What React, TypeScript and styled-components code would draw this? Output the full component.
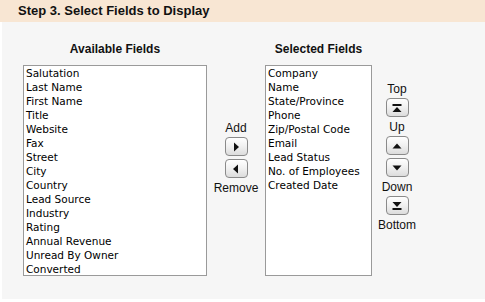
import { createGlobalStyle } from 'styled-components';
import styled from 'styled-components';

const available = [
  'Salutation',
  'Last Name',
  'First Name',
  'Title',
  'Website',
  'Fax',
  'Street',
  'City',
  'Country',
  'Lead Source',
  'Industry',
  'Rating',
  'Annual Revenue',
  'Unread By Owner',
  'Converted',
];

const selected = [
  'Company',
  'Name',
  'State/Province',
  'Phone',
  'Zip/Postal Code',
  'Email',
  'Lead Status',
  'No. of Employees',
  'Created Date',
];

type IconKind = 'right' | 'left' | 'top' | 'up' | 'down' | 'bottom';

const ArrowIcon = ({ kind }: { kind: IconKind }) => {
  return (
    <svg width="12" height="12" viewBox="0 0 12 12">
      {kind === 'right' && <polygon points="4,1.5 9,6 4,10.5" fill="#111" />}
      {kind === 'left' && <polygon points="8,1.5 3,6 8,10.5" fill="#111" />}
      {kind === 'up' && <polygon points="1.5,8.5 6,3.5 10.5,8.5" fill="#111" />}
      {kind === 'down' && <polygon points="1.5,3.5 6,8.5 10.5,3.5" fill="#111" />}
      {kind === 'top' && (
        <>
          <rect x="1.5" y="2" width="9" height="2" fill="#111" />
          <polygon points="1.5,10 6,5 10.5,10" fill="#111" />
        </>
      )}
      {kind === 'bottom' && (
        <>
          <polygon points="1.5,2 6,7 10.5,2" fill="#111" />
          <rect x="1.5" y="8" width="9" height="2" fill="#111" />
        </>
      )}
    </svg>
  );
};

export default function App() {
  return (
    <>
      <GlobalStyle />
      <Page>
        <StepHeader>Step 3. Select Fields to Display</StepHeader>
        <Panel>
          <ListColumn width={184}>
            <ColumnTitle>Available Fields</ColumnTitle>
            <ListBox>
              {available.map((f) => (
                <ListItem key={f}>{f}</ListItem>
              ))}
            </ListBox>
          </ListColumn>

          <ButtonColumn width={58} offset={56}>
            <ButtonLabel>Add</ButtonLabel>
            <ArrowButton title="Add">
              <ArrowIcon kind="right" />
            </ArrowButton>
            <ArrowButton title="Remove" spaced>
              <ArrowIcon kind="left" />
            </ArrowButton>
            <ButtonLabel below>Remove</ButtonLabel>
          </ButtonColumn>

          <ListColumn width={107}>
            <ColumnTitle>Selected Fields</ColumnTitle>
            <ListBox>
              {selected.map((f) => (
                <ListItem key={f}>{f}</ListItem>
              ))}
            </ListBox>
          </ListColumn>

          <ButtonColumn width={50} offset={17}>
            <ButtonLabel>Top</ButtonLabel>
            <ArrowButton title="Top">
              <ArrowIcon kind="top" />
            </ArrowButton>
            <ButtonLabel below>Up</ButtonLabel>
            <ArrowButton title="Up">
              <ArrowIcon kind="up" />
            </ArrowButton>
            <ArrowButton title="Down" spaced>
              <ArrowIcon kind="down" />
            </ArrowButton>
            <ButtonLabel below>Down</ButtonLabel>
            <ArrowButton title="Bottom">
              <ArrowIcon kind="bottom" />
            </ArrowButton>
            <ButtonLabel below>Bottom</ButtonLabel>
          </ButtonColumn>
        </Panel>
      </Page>
    </>
  );
}

const GlobalStyle = createGlobalStyle`
  html, body {
    margin: 0;
    padding: 0;
    background: #ffffff;
  }
  body {
    font-family: "Liberation Sans", Arial, sans-serif;
    color: #000;
  }
`;

const Page = styled.div`
  width: 485px;
  height: 302px;
  display: flex;
  flex-direction: column;
`;

const StepHeader = styled.div`
  height: 22px;
  box-sizing: border-box;
  padding: 3px 0 0 18px;
  background: #f8e6d3;
  font-size: 13px;
  font-weight: bold;
  line-height: 16px;
  color: #111;
`;

const Panel = styled.div`
  height: 277px;
  box-sizing: border-box;
  margin-left: 2px;
  padding: 20px 0 0 21px;
  background: #f6f6f6;
  display: flex;
  align-items: flex-start;
`;

const ListColumn = styled.div<{ width: number }>`
  width: ${(p) => p.width}px;
  display: flex;
  flex-direction: column;
`;

const ColumnTitle = styled.div`
  font-size: 12px;
  font-weight: bold;
  line-height: 14px;
  height: 23px;
  text-align: center;
  color: #111;
`;

const ListBox = styled.div`
  height: 211px;
  box-sizing: border-box;
  border: 1px solid #9a9a9a;
  background: #fff;
  padding: 0 2px;
  overflow: hidden;
`;

const ListItem = styled.div`
  font-family: "DejaVu Sans", "Lucida Grande", sans-serif;
  font-size: 10.5px;
  line-height: 14px;
  white-space: nowrap;
  color: #000;
`;

const ButtonColumn = styled.div<{ width: number; offset: number }>`
  width: ${(p) => p.width}px;
  padding-top: ${(p) => p.offset + 23}px;
  display: flex;
  flex-direction: column;
  align-items: center;
`;

const ButtonLabel = styled.div<{ below?: boolean }>`
  font-size: 12px;
  line-height: 14px;
  color: #111;
  margin-bottom: 2px;
  margin-top: ${(p) => (p.below ? 3 : 0)}px;
`;

const ArrowButton = styled.button<{ spaced?: boolean }>`
  width: 23px;
  height: 19px;
  box-sizing: border-box;
  margin: ${(p) => (p.spaced ? 3 : 0)}px 0 0 0;
  padding: 0;
  border: 1px solid #8a8a8a;
  border-radius: 4px;
  background: linear-gradient(#ffffff, #f0f0f0 50%, #dcdcdc);
  display: flex;
  align-items: center;
  justify-content: center;
  cursor: pointer;
`;
